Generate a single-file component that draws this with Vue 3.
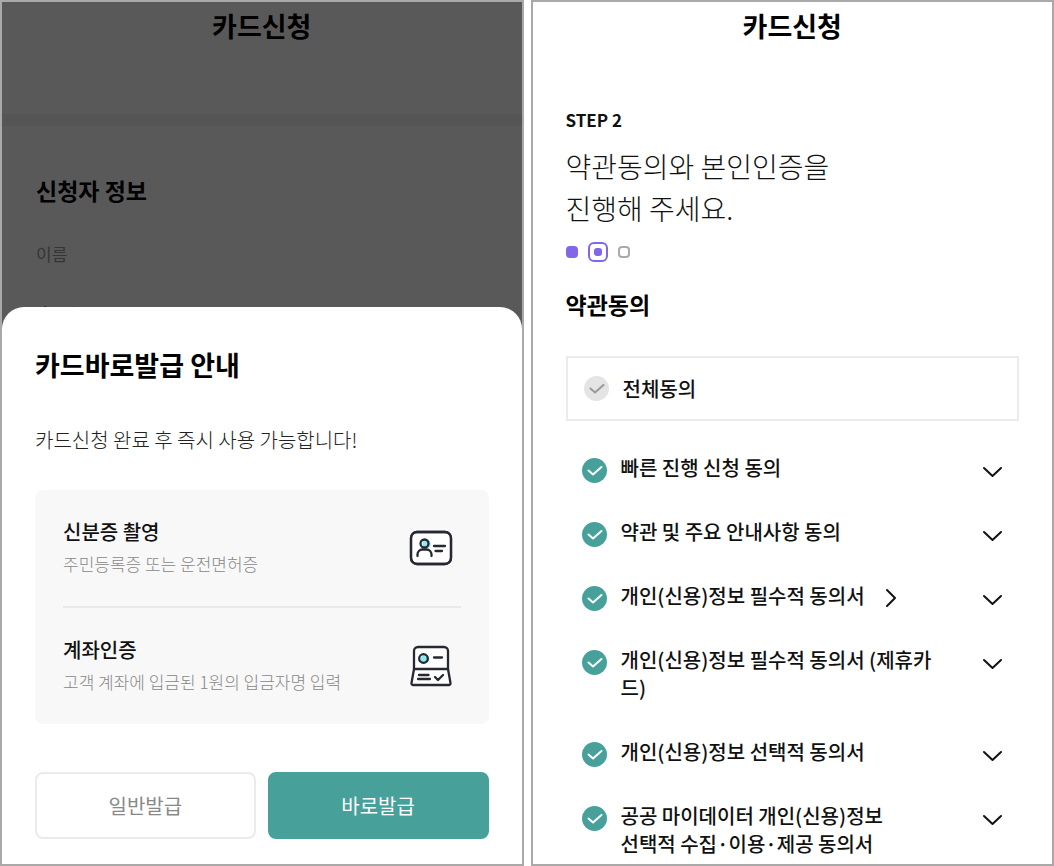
<script setup>
import { ref } from 'vue';

const guides = [
  { id: 'idcard', title: '신분증 촬영', desc: '주민등록증 또는 운전면허증' },
  { id: 'account', title: '계좌인증', desc: '고객 계좌에 입금된 1원의 입금자명 입력' }
];

const terms = ref([
  { id: 1, label: '빠른 진행 신청 동의', checked: true },
  { id: 2, label: '약관 및 주요 안내사항 동의', checked: true },
  { id: 3, label: '개인(신용)정보 필수적 동의서', checked: true, link: true },
  { id: 4, label: '개인(신용)정보 필수적 동의서 (제휴카드)', checked: true },
  { id: 5, label: '개인(신용)정보 선택적 동의서', checked: true },
  { id: 6, label: '공공 마이데이터 개인(신용)정보\n선택적 수집·이용·제공 동의서', checked: true }
]);

const allChecked = ref(false);
const toggleAll = () => {
  terms.value.forEach((term) => {
    term.checked = allChecked.value;
  });
};
</script>

<template>
  <div class="page">
    <section class="phone">
      <header class="header">
        <h1>카드신청</h1>
      </header>
      <div class="band"></div>
      <div class="applicant">
        <h2>신청자 정보</h2>
        <p class="field-name">이름</p>
        <p class="field-value">홍 길동</p>
      </div>
      <div class="dim"></div>

      <div class="sheet" role="dialog" aria-labelledby="sheet-title">
        <h2 id="sheet-title" class="sheet-title">카드바로발급 안내</h2>
        <p class="sheet-text">카드신청 완료 후 즉시 사용 가능합니다!</p>
        <ul class="guides">
          <li v-for="guide in guides" :key="guide.id" class="guide">
            <div>
              <h3>{{ guide.title }}</h3>
              <p>{{ guide.desc }}</p>
            </div>
            <svg v-if="guide.id === 'idcard'" class="guide-icon" viewBox="0 0 44 44">
              <rect x="2" y="6" width="40" height="32" rx="6" fill="#fff" />
              <circle cx="17.500" cy="18" r="4" class="tint" />
              <circle cx="15.500" cy="17.500" r="4" />
              <path d="M8.500 30v-1.500a5 5 0 0 1 5-5h4a5 5 0 0 1 5 5V30M25 20h11M26.500 25h6.500" />
              <rect x="2" y="6" width="40" height="32" rx="6" />
            </svg>
            <svg v-else class="guide-icon" viewBox="0 0 44 44">
              <path d="M5 25V7a4 4 0 0 1 4-4h26a4 4 0 0 1 4 4v18l2.500 14a1.500 1.500 0 0 1-1.500 2H4a1.500 1.500 0 0 1-1.500-2z" fill="#fff" />
              <circle cx="16" cy="15" r="4.300" class="tint" />
              <circle cx="14.500" cy="14.500" r="4.300" />
              <path d="M5 25h34M25 13.500h8M10 31h9.500M9 35h12M26 33l3 3 5-5" />
            </svg>
          </li>
        </ul>
        <div class="actions">
          <button type="button" class="btn">일반발급</button>
          <button type="button" class="btn primary">바로발급</button>
        </div>
      </div>
    </section>

    <section class="phone">
      <header class="header">
        <h1>카드신청</h1>
      </header>
      <div class="agree">
        <p class="step">STEP 2</p>
        <p class="lead">약관동의와 본인인증을<br />진행해 주세요.</p>
        <div class="dots">
          <span class="dot done"></span>
          <span class="dot current"></span>
          <span class="dot"></span>
        </div>
        <h2>약관동의</h2>

        <label class="all">
          <span class="check">
            <input v-model="allChecked" type="checkbox" @change="toggleAll" />
            <svg viewBox="0 0 25 25"><path d="M6.500 12.500l4.500 4 8.500-7.500" /></svg>
          </span>
          <span>전체동의</span>
        </label>

        <ul class="terms">
          <li v-for="term in terms" :key="term.id" class="term">
            <label>
              <span class="check">
                <input v-model="term.checked" type="checkbox" />
                <svg viewBox="0 0 25 25"><path d="M6.500 12.500l4.500 4 8.500-7.500" /></svg>
              </span>
              <span class="term-text">{{ term.label }}</span>
            </label>
            <a v-if="term.link" href="#" class="more" aria-label="자세히 보기">
              <svg viewBox="0 0 12 20"><path d="M2 2l8 8-8 8" /></svg>
            </a>
            <button type="button" class="toggle" aria-label="펼치기">
              <svg viewBox="0 0 20 12"><path d="M1 2l8.500 8L18 2" /></svg>
            </button>
          </li>
        </ul>
      </div>
    </section>
  </div>
</template>

<style>
body {
  margin: 0;
  background: #fff;
}
</style>

<style scoped>
.page {
  display: grid;
  grid-template-columns: 1fr 1fr;
  gap: 7px;
  min-height: 100vh;
  font-family: "Noto Sans CJK KR", sans-serif;
  color: #111;
}

h1,
h2,
h3,
p,
ul {
  margin: 0;
  padding: 0;
}

ul {
  list-style: none;
}

svg {
  display: block;
  fill: none;
  stroke-linecap: round;
  stroke-linejoin: round;
}

.phone {
  position: relative;
  box-sizing: border-box;
  min-width: 0;
  border: 2px solid #a9a9a9;
  background: #fff;
}

.header {
  padding-top: 4px;
  text-align: center;
}

h1 {
  font-size: 27px;
  line-height: 40px;
  font-weight: 700;
  color: #000;
}

h2 {
  font-size: 23px;
  line-height: 32px;
  font-weight: 700;
  color: #000;
}

.band {
  height: 12px;
  margin-top: 68px;
  background: #f3f3f3;
}

.applicant {
  padding: 48px 34px 0;
}

.field-name {
  margin-top: 34px;
  font-size: 17px;
  line-height: 28px;
  color: #999;
}

.field-value {
  margin-top: 34px;
  font-size: 20px;
  line-height: 28px;
  color: #555;
}

.dim {
  position: absolute;
  inset: 0;
  background: rgba(0, 0, 0, 0.65);
}

/* bottom sheet */
.sheet {
  position: absolute;
  left: 0;
  right: 0;
  bottom: 0;
  padding: 38px 33px 25px;
  border-radius: 22px 22px 0 0;
  background: #fff;
}

.sheet-title {
  font-size: 27px;
  line-height: 40px;
}

.sheet-text {
  margin-top: 41px;
  font-size: 20px;
  line-height: 28px;
  font-weight: 300;
  color: #222;
}

.guides {
  margin-top: 36px;
  padding: 0 28px;
  border-radius: 8px;
  background: #f8f8f8;
}

.guide {
  display: flex;
  align-items: center;
  justify-content: space-between;
  padding: 28px 8px 28px 0;
}

.guide + .guide {
  border-top: 2px solid #e8e8e8;
}

.guide h3 {
  font-size: 20px;
  line-height: 28px;
  font-weight: 500;
}

.guide p {
  margin-top: 4px;
  font-size: 17px;
  line-height: 28px;
  font-weight: 300;
  color: #888;
}

.guide-icon {
  flex: none;
  width: 44px;
  height: 44px;
  stroke: #262832;
  stroke-width: 2.3;
}

.tint {
  fill: #8cecf5;
  stroke: none;
}

.actions {
  display: grid;
  grid-template-columns: 1fr 1fr;
  gap: 12px;
  margin-top: 48px;
}

.btn {
  height: 67px;
  border: 2px solid #ebebeb;
  border-radius: 8px;
  background: #fff;
  font-family: inherit;
  font-size: 20px;
  line-height: 28px;
  color: #888;
}

.btn.primary {
  border-color: #48a09b;
  background: #48a09b;
  color: #fff;
}

/* agreement */
.agree {
  padding: 62px 33px 4px;
}

.step {
  font-size: 17px;
  line-height: 24px;
  font-weight: 700;
}

.lead {
  margin-top: 13px;
  font-size: 28px;
  line-height: 42px;
  font-weight: 300;
}

.dots {
  display: flex;
  align-items: center;
  gap: 10px;
  margin: 13px 0 26px;
}

.dot {
  box-sizing: border-box;
  width: 12px;
  height: 12px;
  border: 2px solid #aaa;
  border-radius: 4px;
}

.dot.done {
  border-color: #8166e8;
  background: #8166e8;
}

.dot.current {
  width: 20px;
  height: 20px;
  padding: 4px;
  border-color: #8166e8;
  border-radius: 6px;
}

.dot.current::before {
  content: "";
  display: block;
  height: 8px;
  border-radius: 3px;
  background: #8166e8;
}

.all {
  display: flex;
  align-items: center;
  gap: 14px;
  margin-top: 36px;
  padding: 16px;
  border: 2px solid #ebebeb;
  font-size: 20px;
  line-height: 29px;
  font-weight: 500;
}

.check {
  flex: none;
  display: grid;
  width: 25px;
  height: 25px;
}

.check input,
.check svg {
  grid-area: 1 / 1;
  width: 25px;
  height: 25px;
}

.check input {
  appearance: none;
  margin: 0;
  border-radius: 50%;
  background: #e4e4e4;
}

.check input:checked {
  background: #48a09b;
}

.check svg {
  pointer-events: none;
  stroke: #999;
  stroke-width: 2;
}

.check input:checked + svg {
  stroke: #fff;
}

.terms {
  display: grid;
  gap: 36px;
  margin-top: 33px;
  padding: 0 16px;
}

.term {
  display: flex;
  align-items: flex-start;
  font-size: 20px;
  line-height: 28px;
  font-weight: 500;
}

.term label {
  display: flex;
  gap: 14px;
}

.term .check {
  margin: 4px 0 -1px;
}

.term-text {
  white-space: pre-line;
  word-break: break-all;
}

.more {
  flex: none;
  margin: 6px 0 0 20px;
}

.more svg {
  width: 12px;
  height: 20px;
  stroke: #111;
  stroke-width: 2;
}

.toggle {
  flex: none;
  margin-left: auto;
  padding: 12px 0 0 38px;
  border: 0;
  background: none;
}

.toggle svg {
  width: 20px;
  height: 12px;
  stroke: #111;
  stroke-width: 2;
}
</style>
